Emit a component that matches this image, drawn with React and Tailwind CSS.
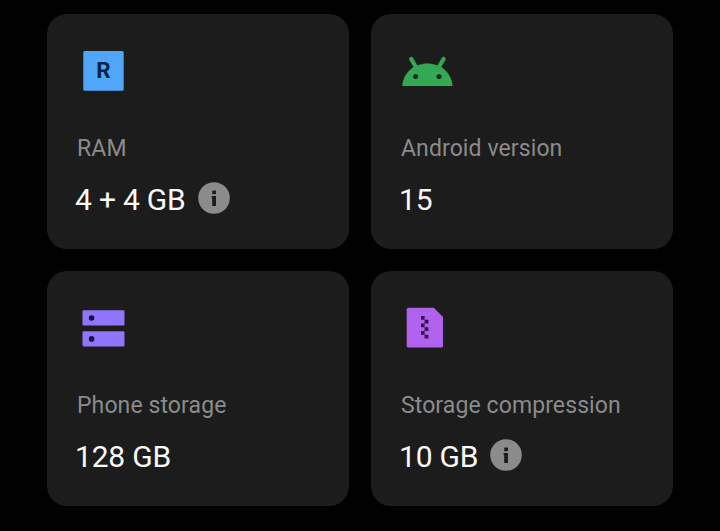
import React from "react";

function RamIcon() {
  return (
    <svg className="block h-12 w-14" viewBox="0 0 56 48">
      <rect x="8.3" y="5" width="40.4" height="39.7" rx="1.5" fill="#4fa6fb" />
      <text x="28.4" y="32.3" textAnchor="middle" fill="#082344" className="font-['Roboto',sans-serif] text-[22.5px] font-bold">R</text>
    </svg>
  );
}

function AndroidIcon() {
  return (
    <svg className="block h-12 w-14" viewBox="0 0 56 48">
      <path d="M3.2 39.9C4.4 26.8 14.8 17.6 28.4 17.6S52.4 26.8 53.6 39.9Z" fill="#34a853" />
      <path d="M12.2 13L17.5 22M44.6 13L39.3 22" stroke="#34a853" strokeWidth="4.2" strokeLinecap="round" />
      <circle cx="16.6" cy="30.4" r="2.5" fill="#10301a" />
      <circle cx="40" cy="30.4" r="2.5" fill="#10301a" />
    </svg>
  );
}

function StorageIcon() {
  return (
    <svg className="block h-12 w-14" viewBox="0 0 56 48">
      <rect x="7.5" y="7.3" width="42" height="15.2" rx="1.3" fill="#8f75fc" />
      <rect x="7.5" y="28.2" width="42" height="15.2" rx="1.3" fill="#8f75fc" />
      <circle cx="16.6" cy="15" r="2.8" fill="#1b103f" />
      <circle cx="16.6" cy="35.9" r="2.8" fill="#1b103f" />
    </svg>
  );
}

function ZipIcon() {
  return (
    <svg className="block h-12 w-14" viewBox="0 0 56 48">
      <path d="M9.7 4.8H34.8L44 14V43Q44 44.6 42.2 44.6H9.5Q7.7 44.6 7.7 43V6.6Q7.7 4.8 9.7 4.8Z" fill="#b062ee" />
      <path d="M22 13h3.6v3.7H22zM25.6 16.7h3.8v3.8h-3.8zM22 20.5h3.6v3.8H22zM25.6 24.3h3.8V28h-3.8zM22 28h3.6v3.8H22zM25.6 31.8h3.8v3.8h-3.8z" fill="#32104b" />
    </svg>
  );
}

function InfoIcon() {
  return (
    <svg className="mb-1 block size-8 shrink-0" viewBox="0 0 32 32">
      <circle cx="16" cy="16" r="15.8" fill="#8b8b8b" />
      <rect x="14.2" y="8.4" width="3.8" height="3.8" rx="0.6" fill="#1c1c1c" />
      <path d="M13.6 14H18V24H14.2V16.2H13.6Z" fill="#1c1c1c" />
    </svg>
  );
}

const specs = [
  { label: "RAM", value: "4 + 4 GB", Icon: RamIcon, info: true },
  { label: "Android version", value: "15", Icon: AndroidIcon },
  { label: "Phone storage", value: "128 GB", Icon: StorageIcon },
  { label: "Storage compression", value: "10 GB", Icon: ZipIcon, info: true },
];

export default function App() {
  return (
    <main className="h-[531px] w-[720px] overflow-hidden bg-black pt-3.5 pl-[47px] font-['Roboto',sans-serif]">
      <div className="grid grid-cols-[302px_302px] grid-rows-[235px_235px] gap-[22px]">
        {specs.map(({ label, value, Icon, info }) => (
          <section key={label} className="rounded-[20px] bg-[#1c1c1c] pt-8 pl-7">
            <Icon />
            <h2 className="mt-[39px] ml-[2px] text-[23px] leading-8 tracking-[0.1px] whitespace-nowrap text-[#8b8b8b]">{label}</h2>
            <div className="mt-[15px] flex h-10 items-center gap-3">
              <span className="text-[30px] leading-10 tracking-[-0.2px] whitespace-nowrap text-[#fafafa]">{value}</span>
              {info && <InfoIcon />}
            </div>
          </section>
        ))}
      </div>
    </main>
  );
}
